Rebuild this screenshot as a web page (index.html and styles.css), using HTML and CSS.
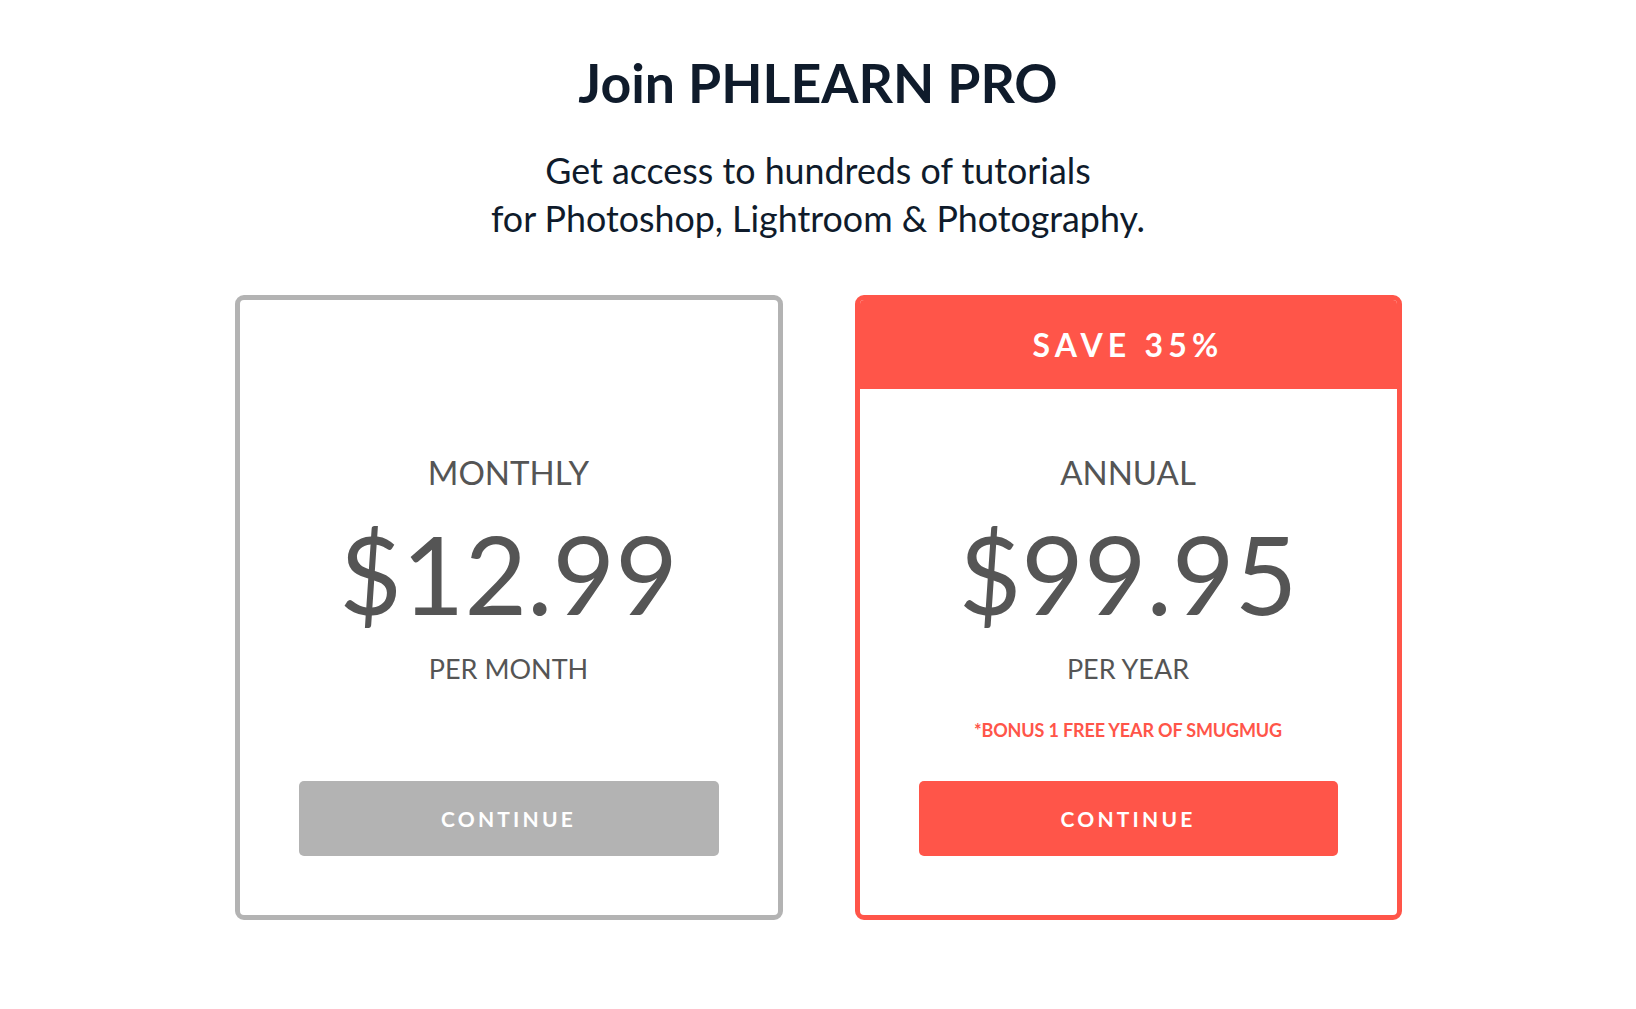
FILE: index.html
```html
<!DOCTYPE html>
<html lang="en">
<head>
<meta charset="utf-8">
<title>Join PHLEARN PRO</title>
<link rel="stylesheet" href="styles.css">
</head>
<body>
<main class="page">
  <h1 class="title">Join PHLEARN PRO</h1>
  <p class="subtitle">Get access to hundreds of tutorials<br>for Photoshop, Lightroom &amp; Photography.</p>
  <section class="plans">
    <article class="card card--monthly">
      <div class="card-head"></div>
      <div class="card-body">
        <h2 class="plan-name">MONTHLY</h2>
        <div class="plan-price">$12.99</div>
        <div class="plan-period">PER MONTH</div>
        <a class="btn btn--gray" href="#">CONTINUE</a>
      </div>
    </article>
    <article class="card card--annual">
      <div class="card-head">SAVE 35%</div>
      <div class="card-body">
        <h2 class="plan-name">ANNUAL</h2>
        <div class="plan-price">$99.95</div>
        <div class="plan-period">PER YEAR</div>
        <div class="plan-bonus">*BONUS 1 FREE YEAR OF SMUGMUG</div>
        <a class="btn btn--red" href="#">CONTINUE</a>
      </div>
    </article>
  </section>
</main>
</body>
</html>
```

FILE: styles.css
```css
* { box-sizing: border-box; }
html, body { margin: 0; padding: 0; background: #fff; }
body {
  font-family: Lato, "Open Sans", "Liberation Sans", sans-serif;
  color: #555;
}
.page {
  padding-top: 50px;
  display: flex;
  flex-direction: column;
  align-items: center;
}
.title {
  margin: 0;
  font-size: 53.6px;
  line-height: 64px;
  font-weight: 700;
  color: #0f1b2b;
  text-align: center;
}
.subtitle {
  margin: 33px 0 0;
  font-size: 35.8px;
  line-height: 48px;
  font-weight: 400;
  color: #0f1b2b;
  text-align: center;
}
.plans {
  margin-top: 52px;
  display: flex;
  gap: 72px;
  justify-content: center;
}
.card {
  width: 548px;
  height: 625px;
  border: 5px solid #b3b3b3;
  border-radius: 9px;
  display: flex;
  flex-direction: column;
  overflow: hidden;
}
.card--annual {
  width: 547px;
  border-color: #ff5549;
}
.card-head {
  height: 89px;
  flex: none;
  display: flex;
  align-items: center;
  justify-content: center;
  font-size: 32px;
  font-weight: 700;
  letter-spacing: 5.2px;
  color: #fff;
}
.card--annual .card-head {
  background: #ff5549;
  margin: -5px -5px 0;
  height: 94px;
  padding-top: 4px;
}
.card-body {
  flex: 1;
  display: flex;
  flex-direction: column;
  align-items: center;
  padding: 63px 59px 59px;
}
.plan-name {
  margin: 0;
  font-size: 33px;
  line-height: 40px;
  font-weight: 400;
  color: #555;
}
.plan-price {
  margin-top: 26px;
  font-size: 108px;
  line-height: 110px;
  font-weight: 400;
  color: #555;
}
.plan-period {
  margin-top: 25px;
  font-size: 27px;
  line-height: 32px;
  color: #555;
}
.plan-bonus {
  margin-top: 33px;
  font-size: 18px;
  line-height: 24px;
  font-weight: 700;
  letter-spacing: -0.15px;
  color: #ff5549;
}
.btn {
  margin-top: auto;
  width: 100%;
  height: 75px;
  border-radius: 5px;
  display: flex;
  align-items: center;
  justify-content: center;
  font-size: 21px;
  font-weight: 700;
  letter-spacing: 3.2px;
  color: #fff;
  text-decoration: none;
}
.btn--gray { background: #b3b3b3; }
.btn--red { background: #ff5549; }
```
